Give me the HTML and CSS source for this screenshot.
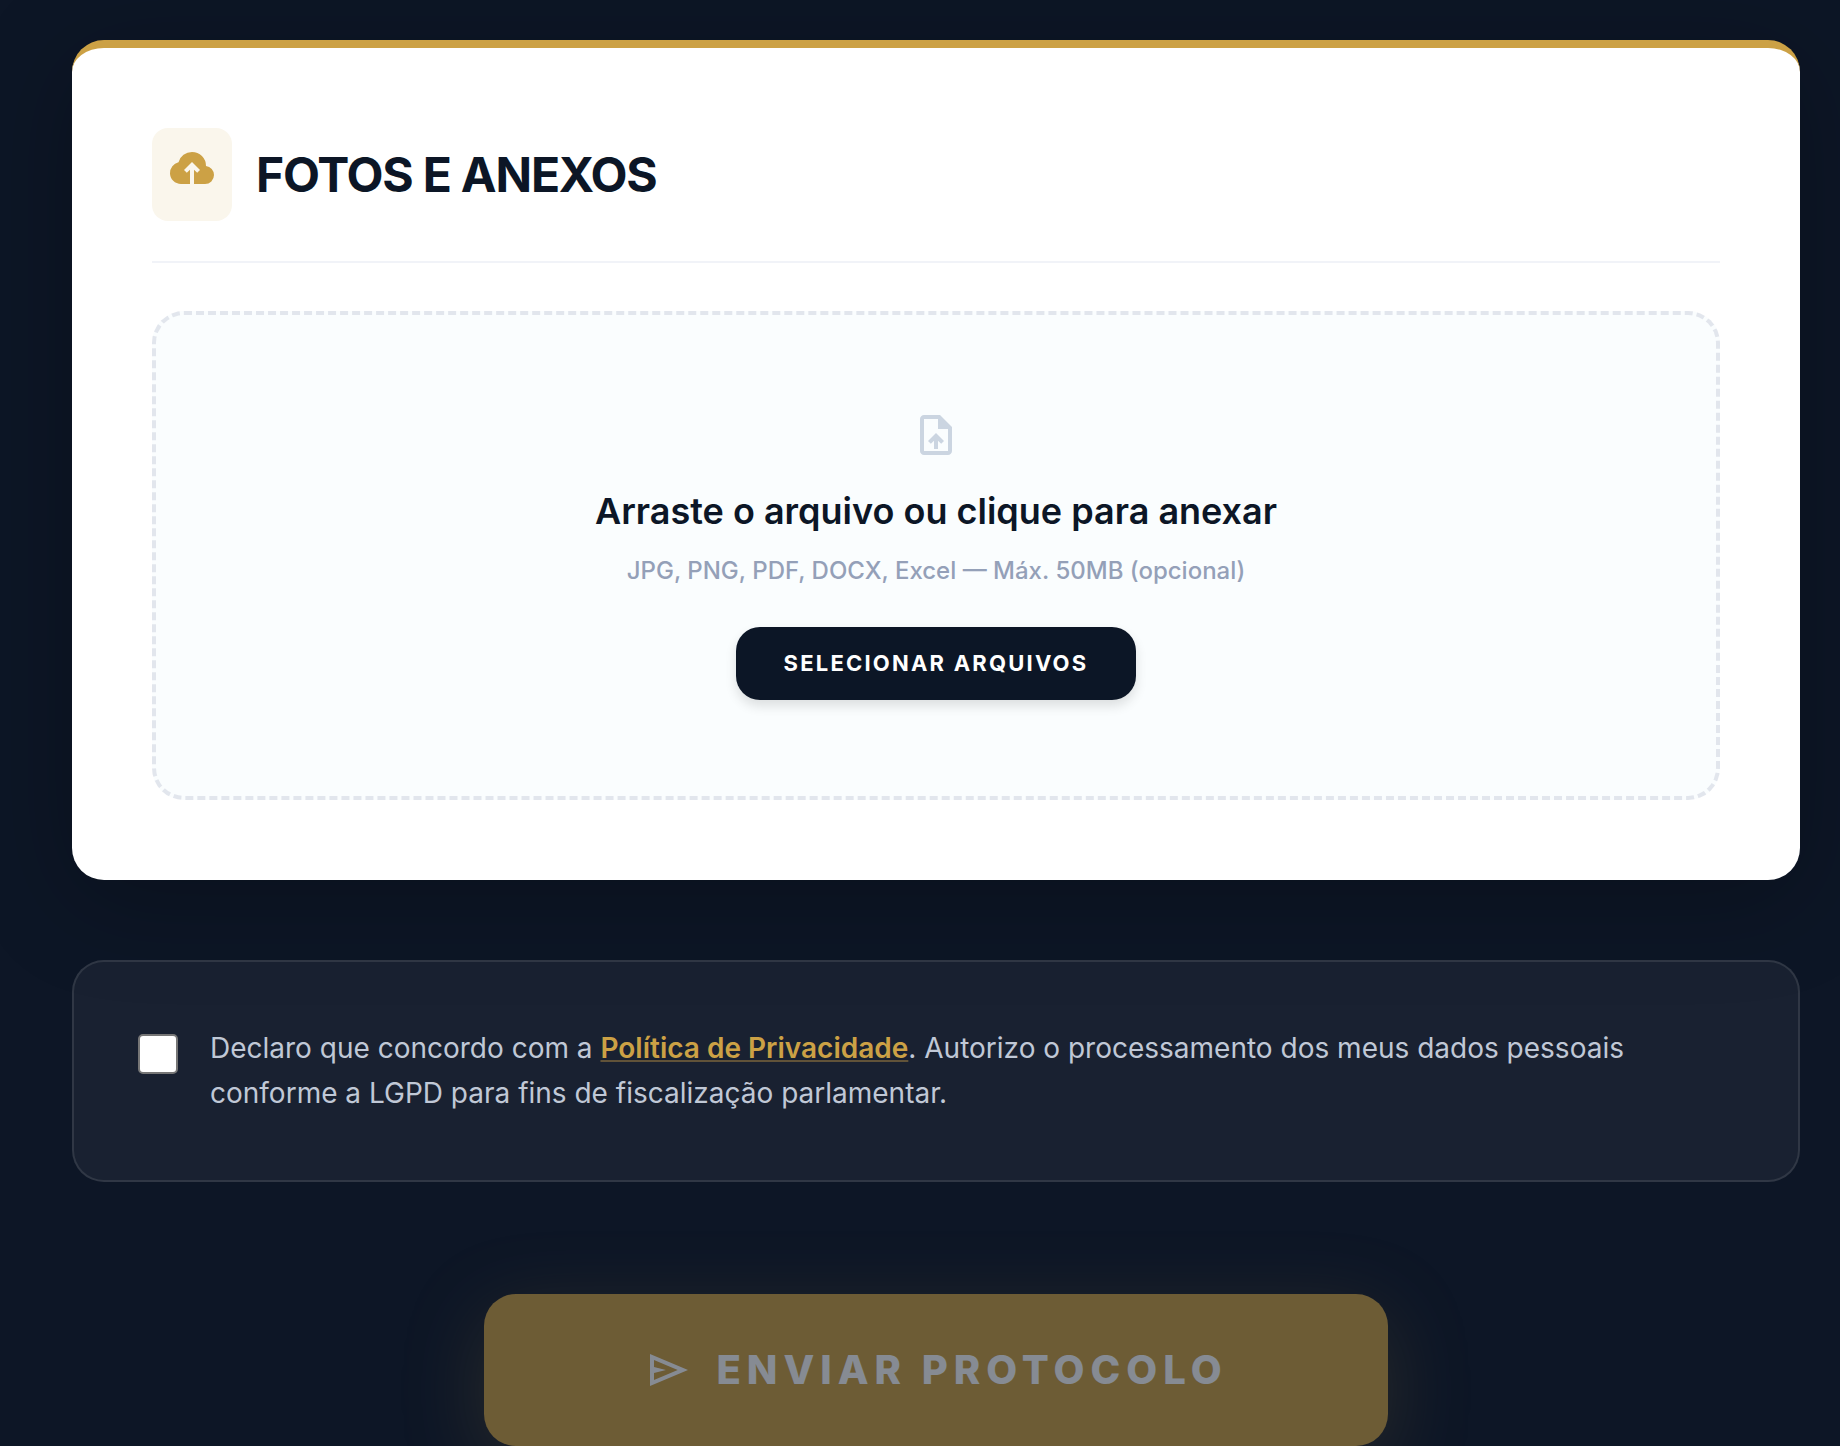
FILE: index.html
```html
<!DOCTYPE html>
<html lang="pt-BR">
<head>
  <meta charset="UTF-8">
  <meta name="viewport" content="width=device-width, initial-scale=1.0">
  <title>Fotos e Anexos</title>
  <link rel="stylesheet" href="styles.css">
</head>
<body>

  <form class="form">
    <section class="card">
      <div class="card-header">
        <span class="card-icon">
          <svg class="icon" viewBox="0 -960 960 960" aria-hidden="true">
            <path d="M260-160q-91 0-155.5-63T40-377q0-78 47-139t123-78q25-92 100-149t170-57q117 0 198.5 81.5T760-520q69 8 114.5 59.5T920-340q0 75-52.5 127.5T740-160H520v-286l64 62 56-56-160-160-160 160 56 56 64-62v286H260Z"/>
          </svg>
        </span>
        <h2>Fotos e Anexos</h2>
      </div>

      <div class="dropzone" id="dropzone">
        <svg class="icon dropzone-icon" viewBox="0 -960 960 960" aria-hidden="true">
          <path d="M440-200h80v-167l64 64 56-57-160-160-160 160 57 56 63-63v167ZM240-80q-33 0-56.5-23.5T160-160v-640q0-33 23.5-56.5T240-880h320l240 240v480q0 33-23.5 56.5T720-80H240Zm280-520v-200H240v640h480v-440H520Z"/>
        </svg>
        <p class="dropzone-title">Arraste o arquivo ou clique para anexar</p>
        <p class="dropzone-hint">JPG, PNG, PDF, DOCX, Excel — Máx. 50MB (opcional)</p>
        <button type="button" class="select-btn" id="select-files">Selecionar Arquivos</button>
        <input type="file" id="files" aria-label="Arquivos" multiple hidden>
      </div>
    </section>

    <div class="consent">
      <input type="checkbox" id="consent">
      <label for="consent">Declaro que concordo com a <a href="#privacidade">Política de Privacidade</a>. Autorizo o processamento dos meus dados pessoais conforme a LGPD para fins de fiscalização parlamentar.</label>
    </div>

    <button type="submit" class="submit-btn" id="submit" disabled>
      <svg class="icon" viewBox="0 -960 960 960" aria-hidden="true">
        <path d="M120-160v-640l760 320-760 320Zm80-120 474-200-474-200v140l240 60-240 60v140Z"/>
      </svg>
      Enviar Protocolo
    </button>
  </form>

  <script>
    const consent = document.getElementById("consent");
    const submitButton = document.getElementById("submit");
    const fileInput = document.getElementById("files");

    // Only allow sending once the privacy policy is accepted
    consent.addEventListener("change", function() {
      submitButton.disabled = !consent.checked;
    });

    document.getElementById("select-files").addEventListener("click", function() {
      fileInput.click();
    });
  </script>

</body>
</html>
```

FILE: styles.css
```css
* {
  box-sizing: border-box;
}

body {
  margin: 0;
  background-color: #0d1626;
  font-family: Inter, "Liberation Sans", sans-serif;
}

.form {
  display: flex;
  flex-direction: column;
  padding: 40px 40px 0 72px;
}

.icon {
  display: block;
  width: 48px;
  height: 48px;
  fill: currentColor;
}

.card {
  padding: 80px;
  background-color: #ffffff;
  border-top: 8px solid #cca145;
  border-radius: 32px;
  box-shadow: 0 20px 100px rgba(0, 0, 0, 0.25);
}

.card-header {
  display: flex;
  align-items: center;
  gap: 24px;
  padding-bottom: 40px;
  margin-bottom: 48px;
  border-bottom: 2px solid #f1f3f8;
}

.card-icon {
  padding: 16px 16px 29px;
  border-radius: 16px;
  background-color: #faf6ec;
  color: #cca145;
}

h2 {
  margin: 0;
  font-size: 48px;
  font-weight: 700;
  line-height: 64px;
  letter-spacing: -0.025em;
  text-transform: uppercase;
  color: #0c1626;
}

.dropzone {
  display: flex;
  flex-direction: column;
  align-items: center;
  padding: 96px;
  border: 4px dashed #e2e6ed;
  border-radius: 32px;
  background-color: #fafdfe;
  text-align: center;
}

.dropzone-icon {
  margin-bottom: 24px;
  color: #cbd5e1;
}

.dropzone-title {
  margin: 0 0 16px;
  font-size: 36px;
  font-weight: 600;
  line-height: 56px;
  color: #0c1626;
}

.dropzone-hint {
  margin: 0 0 40px;
  font-size: 24px;
  font-weight: 500;
  line-height: 32px;
  color: #94a0b8;
}

.select-btn {
  padding: 20px 48px;
  border: none;
  border-radius: 24px;
  background-color: #0c1626;
  box-shadow: 0 6px 12px rgba(0, 0, 0, 0.12);
  color: #ffffff;
  font-family: inherit;
  font-size: 22px;
  font-weight: 700;
  line-height: 33px;
  letter-spacing: 0.1em;
  text-transform: uppercase;
  cursor: pointer;
}

.consent {
  display: flex;
  align-items: flex-start;
  gap: 32px;
  margin: 80px 0 112px;
  padding: 64px;
  border: 2px solid rgba(255, 255, 255, 0.1);
  border-radius: 32px;
  background-color: rgba(255, 255, 255, 0.05);
}

.consent input {
  appearance: none;
  flex-shrink: 0;
  width: 40px;
  height: 40px;
  margin: 8px 0 0;
  border: 2px solid #767676;
  border-radius: 5px;
  background-color: #ffffff;
  cursor: pointer;
}

.consent input:checked {
  background-color: #cca145;
}

.consent label {
  color: #c0c8d6;
  font-size: 28px;
  font-weight: 400;
  line-height: 45px;
}

.consent a {
  color: #cca145;
  font-weight: 600;
  text-decoration: underline 2px rgba(204, 161, 69, 0.4);
  text-decoration-skip-ink: none;
  text-underline-offset: 2px;
}

.submit-btn {
  display: flex;
  align-items: center;
  align-self: center;
  gap: 24px;
  padding: 48px 160px;
  border: none;
  border-radius: 32px;
  background-color: #cca145;
  box-shadow: 0 20px 80px rgba(204, 161, 69, 0.3);
  color: #ffffff;
  font-family: inherit;
  font-size: 40px;
  font-weight: 800;
  line-height: 56px;
  letter-spacing: 0.15em;
  text-transform: uppercase;
  cursor: pointer;
}

.submit-btn:disabled {
  opacity: 0.5;
  cursor: not-allowed;
}
```
